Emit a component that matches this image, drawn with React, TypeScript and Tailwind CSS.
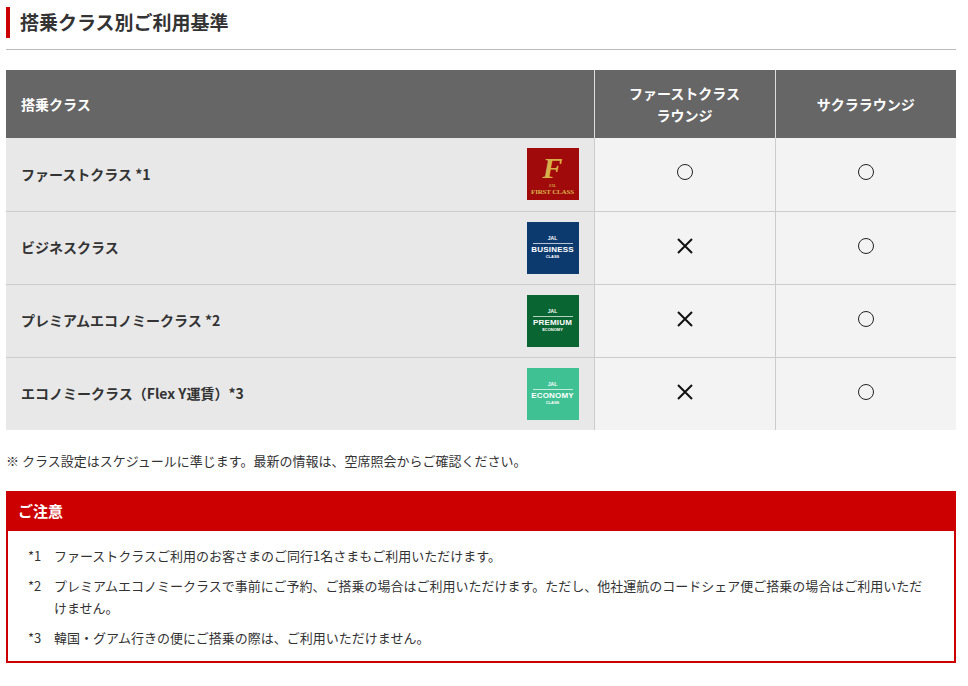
const font = { fontFamily: '"Noto Sans CJK JP", "Noto Sans", sans-serif' };

function Logo({ bg, top, name, sub, first }: { bg: string; top: string; name: string; sub: string; first?: boolean }) {
  return (
    <div className="w-[52px] h-[52px] flex flex-col items-center justify-center shrink-0" style={{ background: bg, fontFamily: '"Liberation Serif", serif' }}>
      {first ? (
        <>
          <span className="text-[30px] leading-[30px] italic text-[#d8b04a]" style={{ fontFamily: '"Liberation Serif", serif' }}>F</span>
          <span className="text-[4px] leading-[5px] text-[#d8b04a]">JAL</span>
          <span className="text-[7px] leading-[8px] text-[#d8b04a] tracking-tight">FIRST CLASS</span>
        </>
      ) : (
        <>
          <span className="text-[5px] leading-[7px] text-white" style={{ fontFamily: '"Liberation Sans", sans-serif' }}>{top}</span>
          <div className="w-[40px] h-px bg-white/70 my-[1px]" />
          <span className="text-[8px] leading-[9px] text-white tracking-wide" style={{ fontFamily: '"Liberation Sans", sans-serif' }}>{name}</span>
          <span className="text-[4px] leading-[6px] text-white" style={{ fontFamily: '"Liberation Sans", sans-serif' }}>{sub}</span>
        </>
      )}
    </div>
  );
}

const rows = [
  { label: "ファーストクラス *1", logo: <Logo bg="#a00a0a" top="" name="" sub="" first />, a: "○" },
  { label: "ビジネスクラス", logo: <Logo bg="#0c3a6e" top="JAL" name="BUSINESS" sub="CLASS" />, a: "✕" },
  { label: "プレミアムエコノミークラス *2", logo: <Logo bg="#096532" top="JAL" name="PREMIUM" sub="ECONOMY" />, a: "✕" },
  { label: "エコノミークラス（Flex Y運賃）*3", logo: <Logo bg="#3fc193" top="JAL" name="ECONOMY" sub="CLASS" />, a: "✕" },
];

function Mark({ m }: { m: string }) {
  if (m === "○")
    return <div className="w-[16px] h-[16px] rounded-full border-[1.5px] border-[#222]" />;
  return (
    <svg width="18" height="18" viewBox="0 0 18 18"><path d="M2 2L16 16M16 2L2 16" stroke="#111" strokeWidth="2" /></svg>
  );
}

export default function App() {
  return (
    <div className="w-[968px] h-[686px] bg-white px-[6px] pt-[7px] text-[#333]" style={font}>
      <div className="flex items-center gap-[10px] h-[31px]">
        <div className="w-[4px] h-[31px] bg-[#cc0000]" />
        <h1 className="text-[19px] font-bold text-[#333]">搭乗クラス別ご利用基準</h1>
      </div>
      <div className="mt-[11px] border-b border-[#bbb] w-[950px]" />
      <table className="mt-[20px] w-[950px] border-collapse text-[14px]">
        <thead>
          <tr className="h-[68px] bg-[#666] text-white font-bold">
            <th className="text-left pl-[15px] w-[588px] font-bold">搭乗クラス</th>
            <th className="w-[181px] border-l border-[#ddd] font-bold leading-[22px]">ファーストクラス<br />ラウンジ</th>
            <th className="border-l border-[#ddd] font-bold">サクララウンジ</th>
          </tr>
        </thead>
        <tbody>
          {rows.map((r, i) => (
            <tr key={i} className="h-[73px] border-b border-[#ccc] last:border-b-0">
              <td className="bg-[#e8e8e8] pl-[15px] pr-[15px]">
                <div className="flex items-center justify-between font-bold text-[14px]">
                  <span>{r.label}</span>
                  {r.logo}
                </div>
              </td>
              <td className="bg-[#f3f3f3] border-l border-[#ccc]"><div className="flex justify-center -mt-[4px]"><Mark m={r.a} /></div></td>
              <td className="bg-[#f3f3f3] border-l border-[#ccc]"><div className="flex justify-center -mt-[4px]"><Mark m="○" /></div></td>
            </tr>
          ))}
        </tbody>
      </table>
      <p className="mt-[21px] text-[13px] text-[#333]">※ クラス設定はスケジュールに準じます。最新の情報は、空席照会からご確認ください。</p>
      <div className="mt-[20px] w-[950px] border-2 border-[#cc0000]">
        <div className="bg-[#cc0000] text-white font-bold text-[15px] h-[38px] flex items-center pl-[10px]">ご注意</div>
        <div className="px-[20px] pt-[14px] pb-[12px] text-[13px] leading-[22px] space-y-[8px]">
          <div className="flex"><span className="w-[26px] shrink-0">*1</span><span>ファーストクラスご利用のお客さまのご同行1名さまもご利用いただけます。</span></div>
          <div className="flex"><span className="w-[26px] shrink-0">*2</span><span>プレミアムエコノミークラスで事前にご予約、ご搭乗の場合はご利用いただけます。ただし、他社運航のコードシェア便ご搭乗の場合はご利用いただけません。</span></div>
          <div className="flex"><span className="w-[26px] shrink-0">*3</span><span>韓国・グアム行きの便にご搭乗の際は、ご利用いただけません。</span></div>
        </div>
      </div>
    </div>
  );
}
